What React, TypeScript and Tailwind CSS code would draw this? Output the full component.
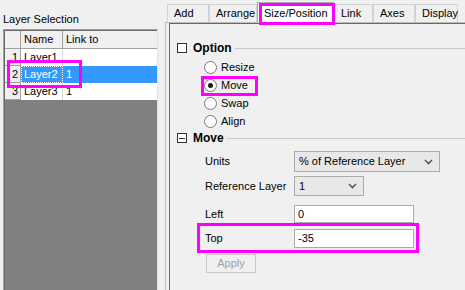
import React from 'react';

const tabs = [
    { label: 'Add', w: 'w-[42px]' },
    { label: 'Arrange', w: 'w-[48px]' },
    { label: 'Size/Position', w: 'w-[77px]', active: true },
    { label: 'Link', w: 'w-[39px]' },
    { label: 'Axes', w: 'w-[42px]' },
    { label: 'Display', w: 'w-[43px]' },
];

const rows = [
    { n: '1', name: 'Layer1', link: '' },
    { n: '2', name: 'Layer2', link: '1', selected: true },
    { n: '3', name: 'Layer3', link: '1' },
];

const Chevron = () => (
    <svg width="9" height="6" viewBox="0 0 9 6" className="shrink-0">
        <polyline points="1,1 4.5,4.5 8,1" fill="none" stroke="#5a5a5a" strokeWidth="1.6" />
    </svg>
);

const Radio: React.FC<{ label: string; checked?: boolean }> = ({ label, checked }) => (
    <div className="h-[18px] flex items-center pl-[34px]">
        <div className="w-[13px] h-[13px] rounded-full border border-[#7a7a7a] bg-white flex items-center justify-center">
            {checked && <div className="w-[5px] h-[5px] rounded-full bg-[#1a1a1a]" />}
        </div>
        <span className="ml-[4px]">{label}</span>
    </div>
);

const GroupHeader: React.FC<{ label: string; minus?: boolean }> = ({ label, minus }) => (
    <div className="h-[10px] flex items-center pl-[7px]">
        <div className="w-[10px] h-[10px] border border-[#333] bg-white flex items-center justify-center shrink-0">
            {minus && <div className="w-[6px] h-px bg-[#333]" />}
        </div>
        <span className="ml-[6px] font-bold text-[12px] text-black">{label}</span>
        <div className="flex-1 h-px bg-[#c9c9c9] ml-[3px]" />
    </div>
);

export default function App() {
    return (
        <div className="relative w-[465px] h-[290px] overflow-hidden bg-[#f0f0f0] flex text-[11px] text-black" style={{ fontFamily: '"Liberation Sans", Arial, sans-serif' }}>
            {/* left: layer selection */}
            <div className="w-[165px] flex flex-col shrink-0">
                <div className="pl-[3px] pt-[11px] h-[29px] text-[11px]">Layer Selection</div>
                <div className="ml-[3px] mr-[7px] flex-1 border-l border-t border-[#a0a0a0] border-r border-r-[#e3e3e3] flex">
                    <div className="flex-1 border-l border-t border-[#696969] flex flex-col">
                        <div className="h-[18px] flex bg-[#f0f0f0] border-b border-[#a0a0a0]">
                            <div className="w-[16px] border-r border-[#a0a0a0]" />
                            <div className="w-[42px] border-r border-[#a0a0a0] pl-[3px] flex items-center">Name</div>
                            <div className="flex-1 pl-[3px] flex items-center">Link to</div>
                        </div>
                        {rows.map(r => (
                            <div key={r.n} className="h-[17px] flex">
                                <div className="w-[16px] bg-[#f0f0f0] border-r border-b border-[#a0a0a0] flex items-center justify-end pr-[2px]">{r.n}</div>
                                <div className={`w-[42px] flex items-center ${r.selected ? 'bg-[#3399ff] text-white' : 'bg-white border-r border-[#d6d6d6]'}`}>
                                    {r.selected ? (
                                        <div className="w-full h-full border border-dotted border-white flex items-center pl-[2px]">{r.name}</div>
                                    ) : (
                                        <span className="pl-[3px]">{r.name}</span>
                                    )}
                                </div>
                                <div className={`flex-1 flex items-center pl-[3px] ${r.selected ? 'bg-[#3399ff] text-white' : 'bg-white'}`}>{r.link}</div>
                            </div>
                        ))}
                        <div className="flex-1 bg-[#808080]" />
                    </div>
                </div>
            </div>

            {/* right: tab control */}
            <div className="flex-1 flex flex-col">
                <div className="h-[22px] flex items-end pl-[2px]">
                    {tabs.map(t => (
                        <div
                            key={t.label}
                            className={`${t.w} flex items-center pl-[6px] border-t border-l border-r ${t.active ? 'h-[21px] bg-white border-[#adadad] -mb-px z-10 relative' : 'h-[18px] bg-[#f0f0f0] border-[#d2d2d2]'}`}
                        >
                            {t.label}
                        </div>
                    ))}
                </div>
                <div className="flex-1 border-l border-t border-[#bdbdbd] flex">
                    <div className="ml-[3px] flex-1 border-l border-t border-[#696969] flex flex-col pt-[19px]">
                        <GroupHeader label="Option" />
                        <div className="mt-[5px] flex flex-col">
                            <Radio label="Resize" />
                            <Radio label="Move" checked />
                            <Radio label="Swap" />
                            <Radio label="Align" />
                        </div>
                        <div className="mt-[3px]">
                            <GroupHeader label="Move" minus />
                        </div>
                        <div className="mt-[8px] flex items-center">
                            <span className="w-[124px] pl-[35px]">Units</span>
                            <div className="w-[146px] h-[21px] border border-[#acacac] bg-[#e8e8e8] flex items-center justify-between pl-[4px] pr-[6px]">
                                <span>% of Reference Layer</span>
                                <Chevron />
                            </div>
                        </div>
                        <div className="mt-[4px] flex items-center">
                            <span className="w-[124px] pl-[35px]">Reference Layer</span>
                            <div className="w-[70px] h-[20px] border border-[#acacac] bg-[#e8e8e8] flex items-center justify-between pl-[4px] pr-[6px]">
                                <span>1</span>
                                <Chevron />
                            </div>
                        </div>
                        <div className="mt-[9px] flex items-center">
                            <span className="w-[124px] pl-[35px]">Left</span>
                            <div className="w-[120px] h-[18px] border border-[#ababab] bg-white flex items-center pl-[3px]">0</div>
                        </div>
                        <div className="mt-[6px] flex items-center">
                            <span className="w-[124px] pl-[35px]">Top</span>
                            <div className="w-[120px] h-[19px] border border-[#ababab] bg-white flex items-center pl-[3px]">-35</div>
                        </div>
                        <div className="mt-[6px] pl-[36px]">
                            <div className="w-[50px] h-[19px] border border-[#c8c8c8] bg-[#f0f0f0] text-[#a0a0a0] flex items-center justify-center">Apply</div>
                        </div>
                    </div>
                </div>
            </div>

            {/* magenta highlight annotations */}
            <div className="absolute left-[7px] top-[60px] w-[75px] h-[28px] border-[3px] border-[#ff00ff] z-20" />
            <div className="absolute left-[259px] top-[3px] w-[76px] h-[22px] border-[3px] border-[#ff00ff] z-20" />
            <div className="absolute left-[201px] top-[76px] w-[57px] h-[20px] border-[3px] border-[#ff00ff] z-20" />
            <div className="absolute left-[197px] top-[223px] w-[222px] h-[30px] border-[3px] border-[#ff00ff] z-20" />
        </div>
    );
}
